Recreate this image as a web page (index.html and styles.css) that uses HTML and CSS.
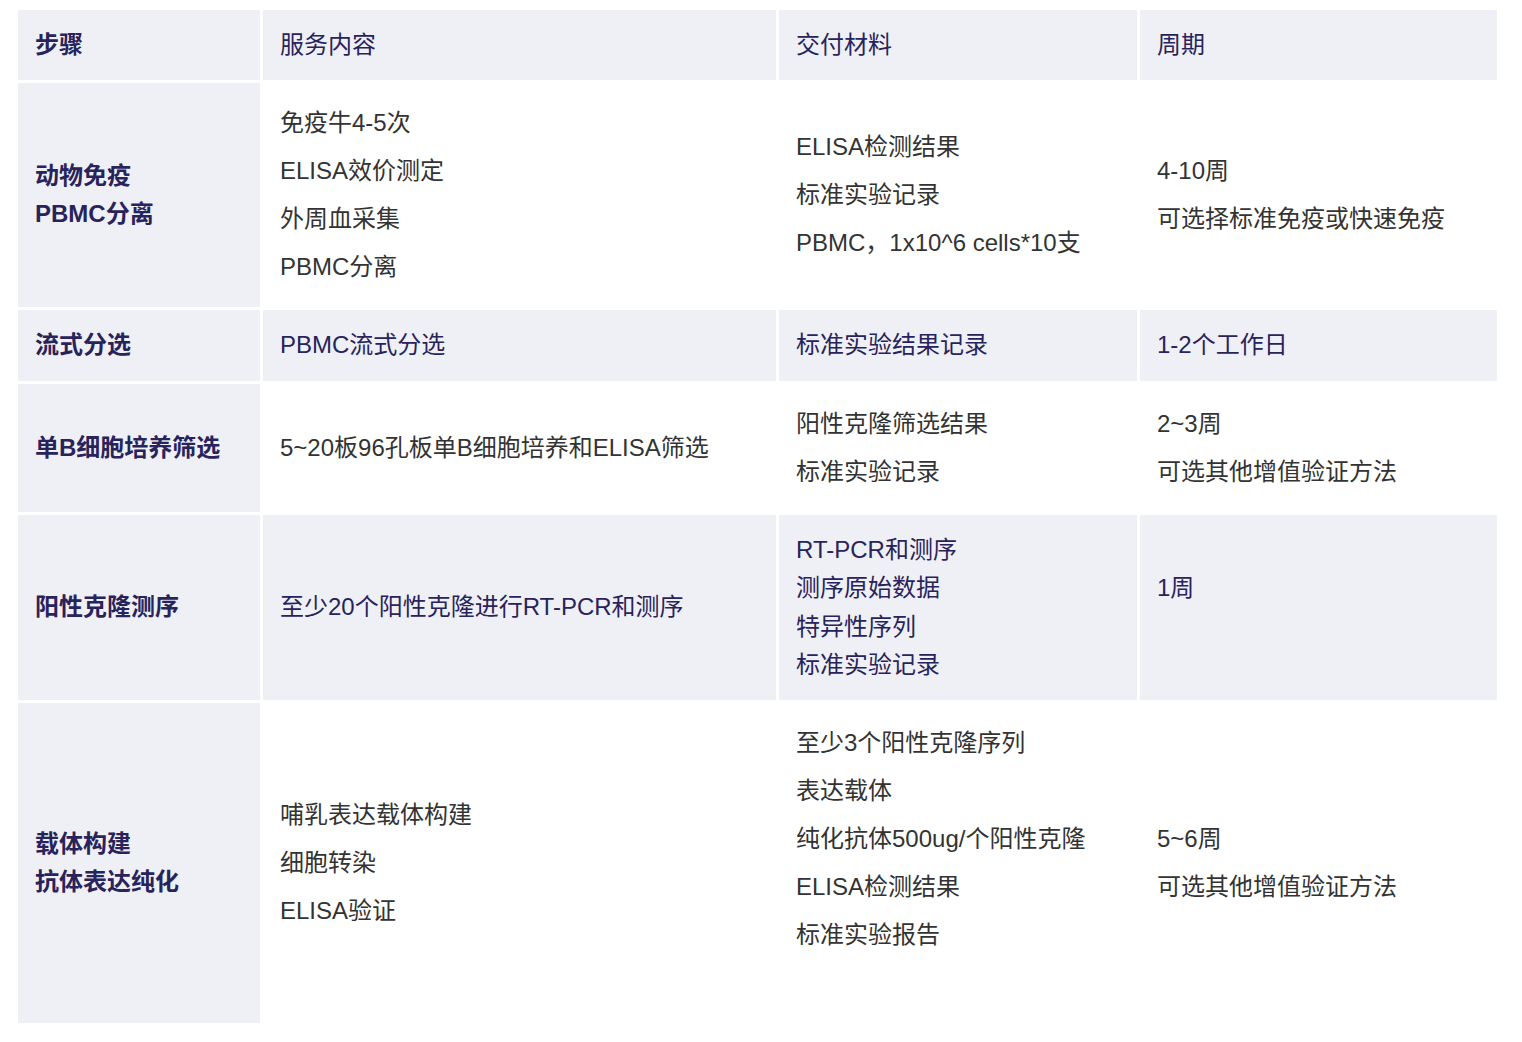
FILE: index.html
```html
<!DOCTYPE html>
<html lang="zh-CN">
<head>
<meta charset="utf-8">
<title>服务流程</title>
<link rel="stylesheet" href="styles.css">
</head>
<body>
<div class="page">
<table class="steps">
  <colgroup>
    <col class="c1">
    <col class="c2">
    <col class="c3">
    <col class="c4">
  </colgroup>
  <thead>
    <tr class="shade">
      <th class="step">步骤</th>
      <th>服务内容</th>
      <th>交付材料</th>
      <th>周期</th>
    </tr>
  </thead>
  <tbody>
    <tr>
      <td class="step">动物免疫<br>PBMC分离</td>
      <td class="list"><p>免疫牛4-5次</p><p>ELISA效价测定</p><p>外周血采集</p><p>PBMC分离</p></td>
      <td class="list"><p>ELISA检测结果</p><p>标准实验记录</p><p>PBMC，1x10^6 cells*10支</p></td>
      <td class="list"><p>4-10周</p><p>可选择标准免疫或快速免疫</p></td>
    </tr>
    <tr class="shade">
      <td class="step">流式分选</td>
      <td>PBMC流式分选</td>
      <td>标准实验结果记录</td>
      <td>1-2个工作日</td>
    </tr>
    <tr>
      <td class="step">单B细胞培养筛选</td>
      <td>5~20板96孔板单B细胞培养和ELISA筛选</td>
      <td class="list"><p>阳性克隆筛选结果</p><p>标准实验记录</p></td>
      <td class="list"><p>2~3周</p><p>可选其他增值验证方法</p></td>
    </tr>
    <tr class="shade">
      <td class="step">阳性克隆测序</td>
      <td>至少20个阳性克隆进行RT-PCR和测序</td>
      <td>RT-PCR和测序<br>测序原始数据<br>特异性序列<br>标准实验记录</td>
      <td>1周<br>&nbsp;</td>
    </tr>
    <tr>
      <td class="step">载体构建<br>抗体表达纯化</td>
      <td class="list"><p>哺乳表达载体构建</p><p>细胞转染</p><p>ELISA验证</p></td>
      <td class="list"><p>至少3个阳性克隆序列</p><p>表达载体</p><p>纯化抗体500ug/个阳性克隆</p><p>ELISA检测结果</p><p>标准实验报告</p><p>&nbsp;</p></td>
      <td class="list"><p>5~6周</p><p>可选其他增值验证方法</p></td>
    </tr>
  </tbody>
</table>
</div>
</body>
</html>
```

FILE: styles.css
```css
html, body {
  margin: 0;
  padding: 0;
  background: #ffffff;
}

.page {
  padding: 7px 0 0 15px;
}

.steps {
  width: 1485px;
  table-layout: fixed;
  border-collapse: separate;
  border-spacing: 3px;
  font-family: "Liberation Sans", "Noto Sans CJK SC", sans-serif;
  font-size: 24px;
  line-height: 38.4px;
  color: #333333;
}

.c1 { width: 242px; }
.c2 { width: 513px; }
.c3 { width: 358px; }
.c4 { width: 357px; }

.steps th,
.steps td {
  box-sizing: border-box;
  padding: 16px 17px;
  text-align: left;
  vertical-align: middle;
  font-weight: 400;
  background: #ffffff;
}

.steps .shade th,
.steps .shade td {
  background: #eff0f5;
  color: #29235c;
}

.steps .step {
  background: #eff0f5;
  color: #29235c;
  font-weight: 700;
}

.steps .list p {
  margin: 0;
  line-height: 48px;
}
```
